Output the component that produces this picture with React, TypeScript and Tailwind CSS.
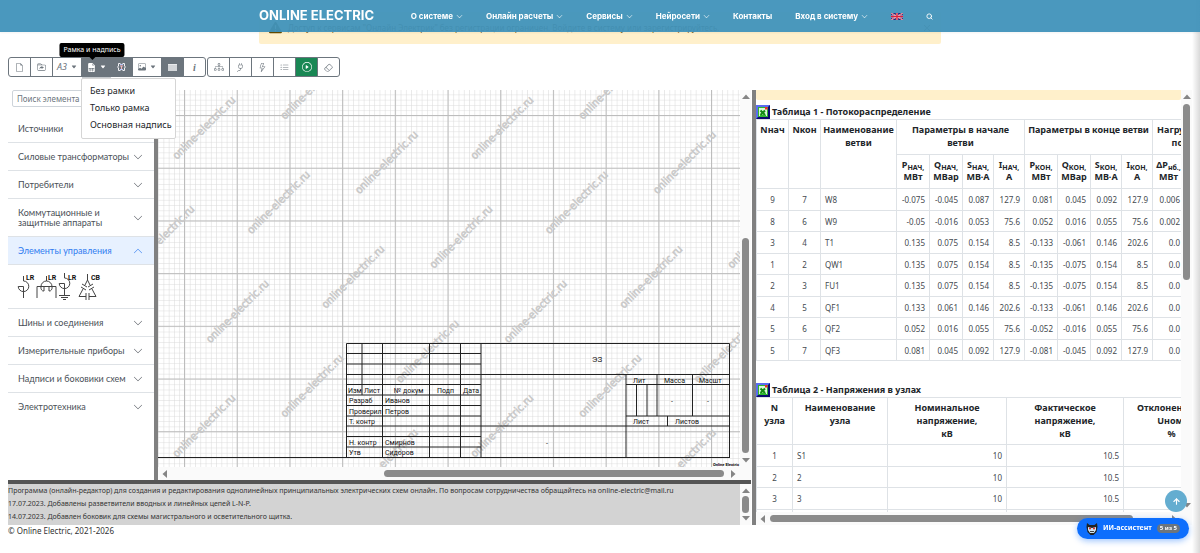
import { ReactNode, useState } from "react";
import clsx from "clsx";
import {
  BsCaretDownFill,
  BsChevronDown,
  BsDiagram3,
  BsEraser,
  BsExclamationTriangleFill,
  BsFileEarmark,
  BsFileEarmarkSpreadsheetFill,
  BsFolderSymlink,
  BsImage,
  BsLightning,
  BsListUl,
  BsPlayCircle,
  BsPlug,
  BsXLg,
} from "react-icons/bs";
import { ArrowUp, Search } from "lucide-react";

const NAV = [
  { label: "О системе", menu: true },
  { label: "Онлайн расчеты", menu: true },
  { label: "Сервисы", menu: true },
  { label: "Нейросети", menu: true },
  { label: "Контакты", menu: false },
  { label: "Вход в систему", menu: true },
];

const FLOW_ROWS = [
  ["9", "7", "W8", "-0.075", "-0.045", "0.087", "127.9", "0.081", "0.045", "0.092", "127.9", "0.006", ""],
  ["8", "6", "W9", "-0.05", "-0.016", "0.053", "75.6", "0.052", "0.016", "0.055", "75.6", "0.002", ""],
  ["3", "4", "T1", "0.135", "0.075", "0.154", "8.5", "-0.133", "-0.061", "0.146", "202.6", "0.0", ""],
  ["1", "2", "QW1", "0.135", "0.075", "0.154", "8.5", "-0.135", "-0.075", "0.154", "8.5", "0.0", ""],
  ["2", "3", "FU1", "0.135", "0.075", "0.154", "8.5", "-0.135", "-0.075", "0.154", "8.5", "0.0", ""],
  ["4", "5", "QF1", "0.133", "0.061", "0.146", "202.6", "-0.133", "-0.061", "0.146", "202.6", "0.0", ""],
  ["5", "6", "QF2", "0.052", "0.016", "0.055", "75.6", "-0.052", "-0.016", "0.055", "75.6", "0.0", ""],
  ["5", "7", "QF3", "0.081", "0.045", "0.092", "127.9", "-0.081", "-0.045", "0.092", "127.9", "0.0", ""],
];

const UNITS = [
  ["P", "НАЧ,", "МВт"],
  ["Q", "НАЧ,", "МВар"],
  ["S", "НАЧ,", "МВ·А"],
  ["I", "НАЧ,", "А"],
  ["P", "КОН,", "МВт"],
  ["Q", "КОН,", "МВар"],
  ["S", "КОН,", "МВ·А"],
  ["I", "КОН,", "А"],
  ["ΔP", "нб.,", "МВт"],
  ["", "", ""],
];

const NODE_ROWS = [
  ["1", "S1", "10", "10.5", ""],
  ["2", "2", "10", "10.5", ""],
  ["3", "3", "10", "10.5", ""],
  ["", "", "", "", ""],
];

function Header() {
  return (
    <header className="fixed inset-x-0 top-0 z-30 h-8 bg-[#4092ba]/95 font-[Inter,sans-serif] text-white shadow-xs">
      <div className="mx-auto flex h-full w-[682px] items-center justify-between">
        <a href="#home" className="text-[13px] font-bold whitespace-nowrap">ONLINE ELECTRIC</a>
        <nav className="flex items-center gap-[23px] pr-2 text-[8px] font-bold whitespace-nowrap">
          {NAV.map((item) => (
            <a key={item.label} href="#nav" className="flex items-center gap-[3px]">
              {item.label}
              {item.menu && <BsChevronDown size={7} />}
            </a>
          ))}
          <a href="#en" aria-label="English">
            <svg width="12" height="7" viewBox="0 0 12 7">
              <rect width="12" height="7" fill="#1f2a7c" />
              <path d="M0 0L12 7M12 0L0 7" stroke="#fff" strokeWidth="1.2" />
              <path d="M0 0L12 7M12 0L0 7" stroke="#d8213b" strokeWidth="0.7" />
              <path d="M6 0V7M0 3.5H12" stroke="#fff" strokeWidth="2.2" />
              <path d="M6 0V7M0 3.5H12" stroke="#d8213b" strokeWidth="1.5" />
            </svg>
          </a>
          <button aria-label="Поиск"><Search size={7} strokeWidth={3} /></button>
        </nav>
      </div>
    </header>
  );
}

function ToolButton({ children, label, wide, variant = "plain" }: {
  children: ReactNode;
  label: string;
  wide?: boolean;
  variant?: "plain" | "dark" | "green";
}) {
  return (
    <button
      aria-label={label}
      className={clsx(
        "-ml-px flex h-5 items-center justify-center gap-1 border border-[#6c757d]",
        wide ? "w-[30px]" : "w-[23px]",
        variant === "plain" && "bg-white text-[#6c757d]",
        variant === "dark" && "bg-[#6c757d] text-white",
        variant === "green" && "bg-[#198754] text-white"
      )}
    >
      {children}
    </button>
  );
}

function Toolbar() {
  return (
    <div className="mt-[13px] flex gap-[2px] pl-px font-['Noto_Sans',sans-serif]">
      <div className="flex [&>button:first-child]:rounded-l-[3px] [&>button:last-child]:rounded-r-[3px]">
        <ToolButton label="Новый"><BsFileEarmark size={9} /></ToolButton>
        <ToolButton label="Открыть"><BsFolderSymlink size={9} /></ToolButton>
        <ToolButton label="Формат" wide>
          <span className="text-[9px] italic">A3</span>
          <BsCaretDownFill size={6} />
        </ToolButton>
        <div className="relative shadow-[0_2px_0_#c5c9cd]">
          <ToolButton label="Рамка и надпись" wide variant="dark">
            <BsFileEarmarkSpreadsheetFill size={9} />
            <BsCaretDownFill size={6} />
          </ToolButton>
          <div className="absolute bottom-[20px] left-[10px] z-20 -translate-x-1/2 rounded-[2px] bg-black px-1 text-[7px] leading-[14px] whitespace-nowrap text-white">
            Рамка и надпись
            <span className="absolute top-full left-1/2 -translate-x-1/2 border-x-[3px] border-t-[3px] border-x-transparent border-t-black" />
          </div>
          <ul className="absolute top-[21px] -left-px z-20 w-[95px] rounded-[2px] border border-[#d5d5d5] bg-white pt-[3px] pb-[5px] text-[9px] leading-[17px] whitespace-nowrap text-[#212529]">
            {["Без рамки", "Только рамка", "Основная надпись"].map((item) => (
              <li key={item}><button className="w-full pl-2 text-left">{item}</button></li>
            ))}
          </ul>
        </div>
        <ToolButton label="Масштаб" variant="dark">
          <svg width="9" height="8" viewBox="0 0 9 8" fill="none">
            <path d="M3.500 0.500H1.500V3L0.500 4L1.500 5V7.500H3.500M5.500 0.500H7.500V3L8.500 4L7.500 5V7.500H5.500" stroke="#f1f1f5" />
            <path d="M3 3H6M4.500 3V6" stroke="#f3b6bd" />
            <path d="M3 1.500H6M3 6.500H6" stroke="#b9c6f5" />
          </svg>
        </ToolButton>
        <ToolButton label="Изображение" wide>
          <BsImage size={8} />
          <BsCaretDownFill size={6} />
        </ToolButton>
        <ToolButton label="Сетка" variant="dark">
          <svg width="9" height="7" viewBox="0 0 9 7">
            <rect width="9" height="7" fill="#e8eaec" />
            <path d="M0 2H9M0 4H9M0 6H9" stroke="#a3a9ae" strokeWidth="0.6" />
          </svg>
        </ToolButton>
        <ToolButton label="Справка"><span className="font-['Liberation_Serif',serif] text-[10px] font-bold italic">i</span></ToolButton>
      </div>
      <div className="flex [&>button:first-child]:rounded-l-[3px] [&>button:last-child]:rounded-r-[3px]">
        <ToolButton label="Структура"><BsDiagram3 size={10} /></ToolButton>
        <ToolButton label="Подключение"><BsPlug size={9} /></ToolButton>
        <ToolButton label="Токи"><BsLightning size={9} /></ToolButton>
        <ToolButton label="Список"><BsListUl size={9} /></ToolButton>
        <ToolButton label="Расчет" variant="green"><BsPlayCircle size={10} /></ToolButton>
        <ToolButton label="Очистить"><BsEraser size={9} /></ToolButton>
      </div>
    </div>
  );
}

function SymbolButton({ label, mark, width, children }: {
  label: string;
  mark: string;
  width: number;
  children: ReactNode;
}) {
  return (
    <button aria-label={label}>
      <svg width={width} height="28" viewBox={`0 0 ${width} 28`} fill="none" stroke="#444">
        {children}
        <text x={width - 10} y="7" fontSize="7" fontWeight="bold" fill="#111" stroke="none" fontFamily="Roboto, sans-serif">
          {mark}
        </text>
      </svg>
    </button>
  );
}

function Symbols() {
  return (
    <div className="flex h-[44px] items-center border-b border-[#dee2e6] pl-[9px]">
      <SymbolButton label="Реактор" mark="LR" width={19}>
        <path d="M6.5 3V8A5.3 5.3 0 1 1 1.2 13.5H6.5V25" />
      </SymbolButton>
      <SymbolButton label="Сдвоенный реактор" mark="LR" width={22}>
        <path d="M10.500 3V8M1 25V13.500H16M20 25V13.500H16M5 13.500A5.500 5.500 0 0 1 16 13.500M5 13.500A2.700 3.500 0 0 0 8 18V13.500M16 13.500A2.700 3.500 0 0 1 13 18V13.500" />
      </SymbolButton>
      <SymbolButton label="Заземляющий реактор" mark="LR" width={20}>
        <path d="M6.500 0V5A5.300 5.300 0 1 1 1.200 10.500H6.500V22M1 22.500H12M3 24.500H10M5 26.500H8" />
      </SymbolButton>
      <SymbolButton label="Конденсаторная батарея" mark="CB" width={23}>
        <path d="M9.500 1V7L7 12M9.500 7L12 12M4 11L9 14M3 14L8 17M10 14L15 11M11 17L16 14M5 16L1 23.500H8M8 20V27M11 20V27M14 16L18 23.500H11" />
      </SymbolButton>
    </div>
  );
}

function SidebarItem({ label, open, onToggle }: { label: string; open?: boolean; onToggle: () => void }) {
  return (
    <button
      onClick={onToggle}
      aria-expanded={!!open}
      className={clsx(
        "flex w-full items-center justify-between border-b border-[#dee2e6] pt-[9px] pr-[11px] pb-2 pl-[10px] text-left text-[9px] leading-[10px]",
        open ? "bg-[#e7f1ff] text-[#2f7bf0]" : "text-[#4a5057]"
      )}
    >
      <span className="whitespace-pre">{label}</span>
      <BsChevronDown size={10} className={clsx("shrink-0", open && "rotate-180")} />
    </button>
  );
}

function Sidebar() {
  const [open, setOpen] = useState("Элементы управления");
  const groups = [
    "Источники",
    "Силовые трансформаторы",
    "Потребители",
    "Коммутационные и\nзащитные аппараты",
    "Элементы управления",
    "Шины и соединения",
    "Измерительные приборы",
    "Надписи и боковики схем",
    "Электротехника",
  ];

  return (
    <aside className="w-[146px] shrink-0 overflow-hidden font-[Lato,Roboto,sans-serif]">
      <div className="px-1 pb-2">
        <input
          aria-label="Поиск элемента"
          placeholder="Поиск элемента"
          className="block h-[17px] w-full rounded-[2px] border border-[#ced4da] px-1 font-['Noto_Sans',sans-serif] text-[8px] placeholder:text-[#6c757d]"
        />
      </div>
      {groups.map((group) => (
        <div key={group} className="last:*:border-b-0">
          <SidebarItem label={group} open={open === group} onToggle={() => setOpen(open === group ? "" : group)} />
          {group === "Элементы управления" && open === group && <Symbols />}
        </div>
      ))}
    </aside>
  );
}

function Arrow({ dir }: { dir: "up" | "down" | "left" | "right" }) {
  const turn = { up: 0, right: 90, down: 180, left: 270 }[dir];
  return (
    <svg width="8" height="8" viewBox="0 0 8 8" className="shrink-0">
      <path d="M0 6L4 1.500L8 6Z" fill="#858585" transform={`rotate(${turn} 4 4)`} />
    </svg>
  );
}

// before / thumb / after are the shares of the track
function ScrollBar({ before, thumb, after, horizontal, corner }: {
  before: number;
  thumb: number;
  after: number;
  horizontal?: boolean;
  corner?: boolean;
}) {
  return (
    <div
      className={clsx(
        "flex shrink-0 items-center bg-[#fafafa]",
        horizontal ? "h-[13px] px-[3px]" : "w-[11px] flex-col pt-[3px]",
        !horizontal && (corner ? "pb-4" : "pb-[3px]")
      )}
    >
      <Arrow dir={horizontal ? "left" : "up"} />
      <span style={{ flexGrow: before }} />
      <span className={clsx("rounded-full bg-[#8b8b8b]", horizontal ? "h-[7px]" : "w-[7px]")} style={{ flexGrow: thumb }} />
      <span style={{ flexGrow: after }} />
      <Arrow dir={horizontal ? "right" : "down"} />
    </div>
  );
}

const STAMP_LINES =
  "M0 367.500H572M188.500 253.500H571.500V367.500H188.500Z" +
  "M204 253.500V305M224.500 253.500V367M271.500 253.500V367M302.500 253.500V367M323 253.500V367" +
  "M188.500 263.500H323M188.500 274H323M188.500 284.500H323M188.500 294.500H323M188.500 305H323M188.500 315.500H323M188.500 326H323" +
  "M323 284.500H571.500M188.500 336H571.500M188.500 346.500H323M188.500 357H323" +
  "M468 284.500V367M468 294.500H571.500M468 326H571.500M499 284.500V326M534.500 284.500V326M478.500 294.500V326M489 294.500V326M509.500 326V336";

const STAMP_TEXT: [number, number, string][] = [
  [190, 303, "Изм"],
  [206, 303, "Лист"],
  [236, 303, "№ докум"],
  [279, 303, "Подп"],
  [305, 303, "Дата"],
  [191, 313, "Разраб"],
  [227, 313, "Иванов"],
  [191, 324, "Проверил"],
  [227, 324, "Петров"],
  [191, 334, "Т. контр"],
  [191, 355, "Н. контр"],
  [227, 355, "Смирнов"],
  [191, 365, "Утв"],
  [227, 365, "Сидоров"],
  [475, 293, "Лит"],
  [506, 293, "Масса"],
  [541, 293, "Масшт"],
  [475, 334, "Лист"],
  [517, 334, "Листов"],
  [513, 314, "-"],
  [549, 314, "-"],
  [388, 356, "-"],
];

const MARKS: [number, number][] = [];
for (let k = -4; k < 7; k++) {
  for (let m = -2; m < 4; m++) {
    MARKS.push([16 + 74.5 * k + 298 * m, 69 + 74.5 * k]);
    MARKS.push([124 + 74.5 * k + 298 * m, 29 + 74.5 * k]);
  }
}

// skip the marks that fall wholly outside of the sheet
const onSheet = ([x, y]: [number, number]) => x > -50 && x < 580 && y > 0 && y < 430;

function Sheet() {
  return (
    <svg className="min-h-0 w-full flex-1" fontFamily="Roboto, sans-serif">
      <defs>
        <pattern id="minor" width="5.27" height="5.27" patternUnits="userSpaceOnUse" x="26.5" y="25.5">
          <path d="M0 0H5.270M0 0V5.270" stroke="#d9d9d9" strokeWidth="1" />
        </pattern>
        <pattern id="major" width="52.7" height="52.7" patternUnits="userSpaceOnUse" x="26" y="25">
          <path d="M0 0.500H52.700M0.500 0V52.700" stroke="#bdbdbd" strokeWidth="1" />
        </pattern>
      </defs>
      <rect width="100%" height="100%" fill="url(#minor)" />
      <rect width="100%" height="100%" fill="url(#major)" />
      <g fontSize="11" fill="#c8c8c8" stroke="#c8c8c8" strokeWidth="0.5" fontFamily="DejaVu Sans Condensed, sans-serif">
        {MARKS.filter(onSheet).map(([x, y], i) => (
          <text key={i} transform={`translate(${x + 3} ${y + 1}) rotate(-45)`}>online-electric.ru</text>
        ))}
      </g>
      <path d={STAMP_LINES} fill="none" stroke="#222" />
      <g fontSize="7" fill="#111">
        {STAMP_TEXT.map(([x, y, text]) => (
          <text key={`${x}-${y}`} x={x} y={y}>{text}</text>
        ))}
      </g>
      <text x="434" y="272" fontSize="8" fill="#222">ЭЗ</text>
      <text x="581" y="376" fontSize="4" fontWeight="bold" textAnchor="end">Online Electric</text>
    </svg>
  );
}

function TableTitle({ children }: { children: ReactNode }) {
  return (
    <div className="flex h-[14px] items-center gap-[2px] text-[9px] font-bold whitespace-nowrap text-[#212529]">
      <svg width="14" height="14" viewBox="0 0 14 14">
        <rect width="14" height="14" fill="#0a0a6e" />
        <path d="M0 14V0H14L12 2H2V12Z" fill="#5a6cf0" />
        <rect x="2" y="2" width="10" height="10" fill="#2fb52f" />
        <rect x="3" y="3" width="8" height="8" fill="#d9fbd9" />
        <path d="M4.500 5.500L9 10M9 5.500L4.500 10" stroke="#138a13" strokeWidth="2" />
        <path d="M4 10.500H10" stroke="#2fb52f" />
        <rect x="9" y="2" width="2.500" height="2.500" fill="#ef2a2a" />
      </svg>
      {children}
    </div>
  );
}

const CELL = "border border-[#dee2e6] px-1";
const HEAD = "border border-[#dee2e6] pt-[3px] align-top";

function FlowTable() {
  const widths = [32, 32, 76, 33, 33, 31, 31, 33, 33, 31, 31, 32, 39];
  return (
    <table className="w-[467px] table-fixed border-collapse text-[8px]">
      <colgroup>
        {widths.map((w, i) => <col key={i} style={{ width: w }} />)}
      </colgroup>
      <thead className="text-[9px] leading-[13px] text-[#212529]">
        <tr className="h-[35px]">
          <th rowSpan={2} className={HEAD}>Nнач</th>
          <th rowSpan={2} className={HEAD}>Nкон</th>
          <th rowSpan={2} className={HEAD}>Наименование ветви</th>
          <th colSpan={4} className={HEAD}>Параметры в начале<br />ветви</th>
          <th colSpan={4} className={HEAD}>Параметры в конце ветви</th>
          <th colSpan={2} className={HEAD}>Нагрузочные<br />потери</th>
        </tr>
        <tr className="h-[34px] leading-3">
          {UNITS.map(([q, sub, unit], i) => (
            <th key={i} className="border border-[#dee2e6] pb-px whitespace-nowrap">
              {q}<sub className="text-[7px]">{sub}</sub><br />{unit}
            </th>
          ))}
        </tr>
      </thead>
      <tbody className="leading-[13px] text-[#444a50]">
        {FLOW_ROWS.map((row) => (
          <tr key={row[2]} className="odd:h-[22px] even:h-[21px]">
            {row.map((value, i) => (
              <td key={i} className={clsx(CELL, i < 2 ? "text-center" : i > 2 && "text-right")}>{value}</td>
            ))}
          </tr>
        ))}
      </tbody>
    </table>
  );
}

function NodeTable() {
  const widths = [36, 95, 119, 117, 96];
  const heads = ["N|узла", "Наименование|узла", "Номинальное|напряжение,|кВ", "Фактическое|напряжение,|кВ", "Отклонение от|Uном,|%"];
  return (
    <table className="w-[463px] table-fixed border-collapse text-[8px] leading-[13px]">
      <colgroup>
        {widths.map((w, i) => <col key={i} style={{ width: w }} />)}
      </colgroup>
      <thead className="text-[9px] text-[#212529]">
        <tr className="h-[47px]">
          {heads.map((head) => (
            <th key={head} className={HEAD}>
              {head.split("|").map((line) => <span key={line} className="block">{line}</span>)}
            </th>
          ))}
        </tr>
      </thead>
      <tbody className="text-[#444a50]">
        {NODE_ROWS.map((row, n) => (
          <tr key={n} className="odd:h-[22px] even:h-[21px]">
            {row.map((value, i) => (
              <td key={i} className={clsx(CELL, i === 0 ? "text-center" : i > 1 && "text-right")}>{value}</td>
            ))}
          </tr>
        ))}
      </tbody>
    </table>
  );
}

function Results() {
  return (
    <section className="flex w-[440px] shrink-0 border-l-4 border-[#808080]">
      <div className="flex min-w-0 flex-1 flex-col">
        <div className="flex min-h-0 flex-1 flex-col overflow-hidden">
          <div className="h-[10px] shrink-0 rounded-b-[2px] bg-[#fff0cb]" />
          <div className="mt-[5px]">
            <TableTitle>Таблица 1 - Потокораспределение</TableTitle>
            <FlowTable />
          </div>
          <div className="mt-[22px]">
            <TableTitle>Таблица 2 - Напряжения в узлах</TableTitle>
            <NodeTable />
          </div>
        </div>
        <ScrollBar horizontal before={3} thumb={362} after={37} />
      </div>
      <ScrollBar corner before={3} thumb={176} after={220} />
    </section>
  );
}

export default function App() {
  return (
    <div className="relative min-h-[553px] overflow-hidden bg-white px-2 pt-3 font-['Noto_Sans',sans-serif]">
      <Header />
      <div className="mx-auto flex h-8 w-[682px] items-center justify-between rounded-[2px] bg-[#fff0cb] px-[10px] pb-px text-[8px] text-[#664d03]">
        <span className="flex items-center gap-[6px]">
          <BsExclamationTriangleFill size={13} />
          Доступ к сервисам "Онлайн Электрик" без регистрации ограничен. Войдите в систему или зарегистрируйтесь.
        </span>
        <button aria-label="Закрыть"><BsXLg size={8} /></button>
      </div>

      <Toolbar />

      <main className="mt-[13px] flex h-[435px]">
        <div className="flex min-w-0 flex-1 flex-col pr-[1px]">
          <div className="flex min-h-0 flex-1">
            <Sidebar />
            <div className="flex min-w-0 flex-1 border-l-4 border-[#808080]">
              <div className="flex min-w-0 flex-1 flex-col">
                <Sheet />
                <ScrollBar horizontal before={215} thumb={341} after={5} />
              </div>
              <ScrollBar corner before={137} thumb={215} after={3} />
            </div>
          </div>
          <div className="flex h-[45px] shrink-0 border-t-4 border-[#555]">
            <div className="min-w-0 flex-1 bg-[#d3d3d3] text-[7px] leading-[13px] whitespace-nowrap text-[#333]">
              <p>Программа (онлайн-редактор) для создания и редактирования однолинейных принципиальных электрических схем онлайн. По вопросам сотрудничества обращайтесь на online-electric@mail.ru</p>
              <p>17.07.2023. Добавлены разветвители вводных и линейных цепей L-N-P.</p>
              <p>14.07.2023. Добавлен боковик для схемы магистрального и осветительного щитка.</p>
            </div>
            <ScrollBar before={1} thumb={12} after={1} />
          </div>
        </div>
        <Results />
      </main>

      <footer className="text-[8px] leading-3 text-[#333]">© Online Electric, 2021-2026</footer>

      {/* page edge shade */}
      <div className="pointer-events-none absolute inset-y-0 right-0 w-2 bg-linear-to-r from-transparent to-black/15" />

      <a
        href="#top"
        aria-label="Наверх"
        className="fixed right-[13px] bottom-[41px] z-20 flex size-[22px] items-center justify-center rounded-full bg-[#64add0] text-white"
      >
        <ArrowUp size={9} strokeWidth={3} />
      </a>
      <button className="fixed right-[11px] bottom-[14px] z-20 flex h-[21px] w-[112px] items-center justify-center gap-[5px] rounded-full bg-[#0d6efd] text-[7px] font-bold whitespace-nowrap text-white shadow-[0_2px_6px_rgba(13,110,253,0.4)]">
        <svg width="12" height="12" viewBox="0 0 12 12">
          <path d="M1 0L3.500 2H8.500L11 0L11.500 4L10.500 9L7.500 12H4.500L1.500 9L0.500 4Z" fill="#222" />
          <path d="M2 4L6 5L10 4V7L8 10H4L2 7Z" fill="#cfe6f2" />
          <circle cx="4" cy="5.500" r="1" fill="#e02020" />
          <circle cx="8" cy="5.500" r="1" fill="#e02020" />
          <path d="M4 8.500H8" stroke="#444" />
        </svg>
        ИИ-ассистент
        <span className="rounded-full bg-[#6c757d] px-[3px] text-[6px] leading-[9px]">5 из 5</span>
      </button>
    </div>
  );
}
